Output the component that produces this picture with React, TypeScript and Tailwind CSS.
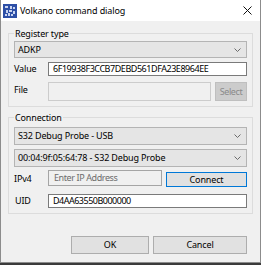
import { ReactNode } from 'react';

function Chevron() {
  return (
    <svg width="7" height="4" viewBox="0 0 7 4" className="shrink-0">
      <path d="M0.5 0.5 L3.5 3.5 L6.5 0.5" stroke="#6b6b6b" fill="none" strokeWidth="1" />
    </svg>
  );
}

function Combo({ value, height }: { value: string; height: string }) {
  return (
    <div
      className={`flex items-center justify-between bg-[#e5e5e5] border border-[#b4b4b4] pl-[3px] pr-[5px] ${height}`}
    >
      <span>{value}</span>
      <Chevron />
    </div>
  );
}

function Group({ title, children, className = '' }: { title: string; children: ReactNode; className?: string }) {
  return (
    <fieldset className={`ml-[7px] w-[245px] border border-[#dcdcdc] px-[5px] ${className}`}>
      <legend className="px-[1px] leading-[13px]">{title}</legend>
      {children}
    </fieldset>
  );
}

function AppIcon() {
  return (
    <svg width="14" height="14" viewBox="0 0 14 14">
      <rect x="0" y="0" width="14" height="14" fill="#2d4fa6" />
      <path
        d="M2 2h3v2H2zM7 2h2v3H7zM10 3h2v2h-2zM3 6h2v3H3zM6 6h3v2H6zM10 7h2v3h-2zM2 10h2v2H2zM5 9h2v3H5zM8 10h2v2H8z"
        fill="#c9d4f0"
      />
    </svg>
  );
}

export default function App() {
  return (
    <div className="w-[261px] h-[265px] bg-[#3b3b3b] font-['Noto_Sans',sans-serif] text-[9px] tracking-[-0.15px] text-black">
      <div className="h-[263px] bg-[#f0f0f0] border-x border-b border-[#8c8c8c]">
        {/* title bar */}
        <div className="h-[21px] bg-white flex items-center pl-[2px] pr-[8px]">
          <AppIcon />
          <span className="ml-[3px] text-[9px] tracking-[-0.1px] leading-[13px]">Volkano command dialog</span>
          <svg width="9" height="9" viewBox="0 0 9 9" className="ml-auto">
            <path d="M0.5 0.5 L8.5 8.5 M8.5 0.5 L0.5 8.5" stroke="#111" strokeWidth="1" />
          </svg>
        </div>

        <div className="pt-[6px]">
          <Group title="Register type" className="pt-[1px] pb-[5px]">
            <Combo value="ADKP" height="h-[17px]" />
            <div className="flex items-center mt-[4px]">
              <span className="w-[34px]">Value</span>
              <div className="flex-1 h-[14px] bg-white border border-[#7a7a7a] pl-[4px] flex items-center tracking-[-0.45px]">
                6F19938F3CCB7DEBD561DFA23E8964EE
              </div>
            </div>
            <div className="flex mt-[6px]">
              <span className="w-[34px] leading-[13px] pt-[1px]">File</span>
              <div className="w-[163px] h-[19px] bg-[#f0f0f0] border border-[#cccccc]" />
              <button
                disabled
                className="ml-[4px] w-[32px] h-[19px] bg-[#cccccc] border border-[#bfbfbf] text-[#8a8a8a] tracking-[-0.4px]"
              >
                Select
              </button>
            </div>
          </Group>

          <Group title="Connection" className="mt-[4px] pt-[3px] pb-[5px]">
            <Combo value="S32 Debug Probe - USB" height="h-[18px]" />
            <div className="mt-[4px]">
              <Combo value="00:04:9f:05:64:78 - S32 Debug Probe" height="h-[18px]" />
            </div>
            <div className="flex mt-[3px]">
              <span className="w-[34px] leading-[13px] pt-[2px]">IPv4</span>
              <div className="w-[114px] h-[16px] bg-[#f0f0f0] border border-[#a5a5a5] pl-[5px] flex items-center text-[#6d6d6d] tracking-[-0.4px]">
                Enter IP Address
              </div>
              <button className="ml-[4px] mt-[2px] w-[81px] h-[15px] bg-[#e1e1e1] border border-[#0078d7]">
                Connect
              </button>
            </div>
            <div className="flex items-center mt-[7px]">
              <span className="w-[34px] pl-[1px]">UID</span>
              <div className="flex-1 h-[14px] bg-white border border-[#7a7a7a] pl-[4px] flex items-center tracking-[-0.5px]">
                D4AA63550B000000
              </div>
            </div>
          </Group>

          <div className="flex ml-[70px] mt-[22px] gap-[4px]">
            <button className="w-[78px] h-[18px] bg-[#e1e1e1] border border-[#adadad]">OK</button>
            <button className="w-[94px] h-[18px] bg-[#e1e1e1] border border-[#adadad]">Cancel</button>
          </div>
        </div>
      </div>
    </div>
  );
}
